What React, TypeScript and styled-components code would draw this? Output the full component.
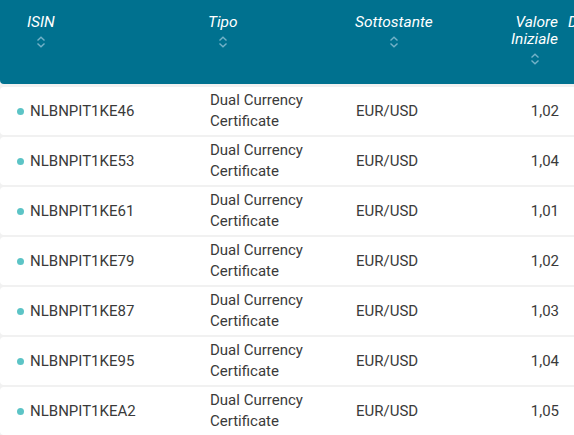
import React from "react";
import styled, { createGlobalStyle } from "styled-components";

const GlobalStyle = createGlobalStyle`
  html, body { margin: 0; padding: 0; }
  body {
    background: #f1f1f1;
    overflow: hidden;
    font-family: Roboto, "Noto Sans", sans-serif;
  }
`;

const COLS = "195px 148px 137px 86px 120px";

const Table = styled.div`
  width: 686px;
  display: flex;
  flex-direction: column;
  gap: 2px;
`;

const Header = styled.div`
  display: grid;
  grid-template-columns: ${COLS};
  height: 84px;
  background: #00718f;
  border-radius: 0 0 4px 4px;
  margin-bottom: 1px;
  box-sizing: border-box;
  padding-top: 14px;
`;

const HeadCell = styled.div<{ $pl?: number; $align?: "left" | "right" }>`
  padding-left: ${(p) => p.$pl ?? 0}px;
  display: flex;
  justify-content: ${(p) => (p.$align === "right" ? "flex-end" : "flex-start")};
  padding-right: ${(p) => (p.$align === "right" ? 8 : 0)}px;
`;

const HeadInner = styled.div`
  display: inline-flex;
  flex-direction: column;
  align-items: center;
`;

const HeadLabel = styled.span<{ $align?: "left" | "right" }>`
  display: block;
  color: #ffffff;
  font-style: italic;
  font-size: 15.5px;
  line-height: 17px;
  white-space: nowrap;
  text-align: ${(p) => p.$align ?? "left"};
`;

const SortIcon = styled.svg`
  margin-top: 5px;
  width: 10px;
  height: 12px;
  display: block;
`;

const Row = styled.div`
  display: grid;
  grid-template-columns: ${COLS};
  height: 48px;
  background: #ffffff;
  border-radius: 4px;
  align-items: center;
  color: #3a3a3a;
  font-size: 15px;
  line-height: 21px;
`;

const Cell = styled.div<{ $pl?: number; $align?: "left" | "right" }>`
  padding-left: ${(p) => p.$pl ?? 0}px;
  padding-right: ${(p) => (p.$align === "right" ? 7 : 0)}px;
  text-align: ${(p) => p.$align ?? "left"};
  display: flex;
  align-items: center;
  justify-content: ${(p) => (p.$align === "right" ? "flex-end" : "flex-start")};
`;

const Dot = styled.span`
  width: 7px;
  height: 7px;
  border-radius: 50%;
  background: #5cc4c6;
  margin-right: 6px;
  flex: none;
`;

const Sort = () => (
  <SortIcon viewBox="0 0 10 12" fill="none">
    <path d="M1.5 4.5 L5 1.2 L8.5 4.5" stroke="#73b2c8" strokeWidth="1.4" />
    <path d="M1.5 7.5 L5 10.8 L8.5 7.5" stroke="#73b2c8" strokeWidth="1.4" />
  </SortIcon>
);

const rows = [
  ["NLBNPIT1KE46", "1,02"],
  ["NLBNPIT1KE53", "1,04"],
  ["NLBNPIT1KE61", "1,01"],
  ["NLBNPIT1KE79", "1,02"],
  ["NLBNPIT1KE87", "1,03"],
  ["NLBNPIT1KE95", "1,04"],
  ["NLBNPIT1KEA2", "1,05"],
];

export default function App() {
  return (
    <>
      <GlobalStyle />
      <Table>
        <Header>
          <HeadCell $pl={27}>
            <HeadInner>
              <HeadLabel>ISIN</HeadLabel>
              <Sort />
            </HeadInner>
          </HeadCell>
          <HeadCell $pl={13}>
            <HeadInner>
              <HeadLabel>Tipo</HeadLabel>
              <Sort />
            </HeadInner>
          </HeadCell>
          <HeadCell $pl={12}>
            <HeadInner>
              <HeadLabel>Sottostante</HeadLabel>
              <Sort />
            </HeadInner>
          </HeadCell>
          <HeadCell $align="right">
            <HeadInner>
              <HeadLabel $align="right">
                Valore
                <br />
                Iniziale
              </HeadLabel>
              <Sort />
            </HeadInner>
          </HeadCell>
          <HeadCell $pl={2}>
            <HeadInner>
              <HeadLabel>Data</HeadLabel>
              <Sort />
            </HeadInner>
          </HeadCell>
        </Header>
        {rows.map(([isin, val]) => (
          <Row key={isin}>
            <Cell $pl={17}>
              <Dot />
              {isin}
            </Cell>
            <Cell $pl={15}>
              Dual Currency
              <br />
              Certificate
            </Cell>
            <Cell $pl={13}>EUR/USD</Cell>
            <Cell $align="right">{val}</Cell>
            <Cell $pl={10}>15/03/2024</Cell>
          </Row>
        ))}
      </Table>
    </>
  );
}
